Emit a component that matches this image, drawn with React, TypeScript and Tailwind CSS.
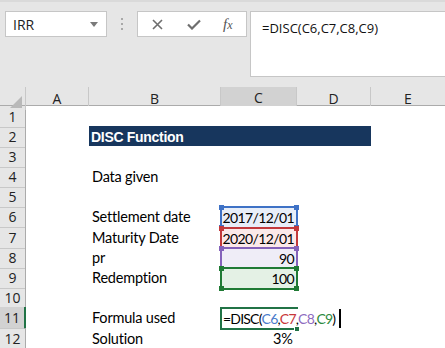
import React from "react";

const ui = { fontFamily: '"Open Sans", "Noto Sans", sans-serif' };
const cell = { fontFamily: 'Lato, "Open Sans", sans-serif' };

const heights = [20, 20, 20, 20, 20, 21, 20, 20, 20, 20, 21, 20];

const refs = {
  6: { value: "2017/12/01", border: "border-[#3f72c6]", fill: "bg-[#e8eef8]", handle: "bg-[#3f72c6]" },
  7: { value: "2020/12/01", border: "border-[#c2393c]", fill: "bg-[#fbe9e9]", handle: "bg-[#c2393c]" },
  8: { value: "90", border: "border-[#8462ba]", fill: "bg-[#efedf7]", handle: "bg-[#8462ba]" },
  9: { value: "100", border: "border-[#1f7a34]", fill: "bg-[#e4f1e5]", handle: "bg-[#1f7a34]" },
} as const;

const labels: Record<number, string> = {
  4: "Data given",
  6: "Settlement date",
  7: "Maturity Date",
  8: "pr",
  9: "Redemption",
  11: "Formula used",
  12: "Solution",
};

function RefCell({ row }: { row: 6 | 7 | 8 | 9 }) {
  const r = refs[row];
  return (
    <div className={`relative flex h-full items-center justify-end pr-[3px] ${r.fill}`}>
      <div className={`absolute -left-[1px] -right-[1px] top-0 -bottom-[1px] border-2 ${r.border}`} />
      <span className={`absolute -left-[2px] -top-[1px] h-[5px] w-[5px] ${r.handle}`} />
      <span className={`absolute -right-[2px] -top-[1px] h-[5px] w-[5px] ${r.handle}`} />
      <span className={`absolute -left-[2px] -bottom-[2px] h-[5px] w-[5px] ${r.handle}`} />
      <span className={`absolute -right-[2px] -bottom-[2px] h-[5px] w-[5px] ${r.handle}`} />
      <span className="relative text-[14px] tracking-[-0.6px] text-black">{r.value}</span>
    </div>
  );
}

function FormulaCell() {
  return (
    <div className="relative flex h-full items-center">
      <div className="absolute -left-[1px] -right-[1px] top-0 -bottom-[1px] border-2 border-r-0 border-[#217346]" />
      <span className="absolute -right-[3px] -bottom-[3px] h-[6px] w-[6px] border border-white bg-[#217346]" />
      <span className="relative z-10 flex items-center whitespace-nowrap pl-[2px] text-[14px] tracking-[-0.8px] text-black">
        =DISC(<span className="text-[#4a7bcb]">C6</span>,<span className="text-[#c8373a]">C7</span>,
        <span className="text-[#8e6bc0]">C8</span>,<span className="text-[#2b8a3e]">C9</span>)
        <span className="ml-[4px] inline-block h-[19px] w-[2px] bg-black" />
      </span>
    </div>
  );
}

export default function App() {
  return (
    <div className="h-[348px] w-[445px] overflow-hidden bg-[#e6e6e6]" style={ui}>
      {/* toolbar */}
      <div className="h-[87px] border-t-2 border-[#dadada] pt-[9px]">
        <div className="flex items-start">
          <div className="ml-[5px] flex h-[26px] w-[102px] items-center justify-between border border-[#c6c6c6] bg-white pl-[7px] pr-[8px]">
            <span className="text-[14px] text-[#222]">IRR</span>
            <svg width="8" height="5" viewBox="0 0 8 5">
              <path d="M0 0h8L4 5z" fill="#7a7a7a" />
            </svg>
          </div>
          <div className="ml-[14px] mt-[7px] flex w-[4px] flex-col gap-[3px]">
            <span className="h-[2px] w-[2px] bg-[#a8a8a8]" />
            <span className="h-[2px] w-[2px] bg-[#a8a8a8]" />
            <span className="h-[2px] w-[2px] bg-[#a8a8a8]" />
          </div>
          <div className="ml-[12px] flex h-[26px] w-[110px] items-center border border-[#c6c6c6] bg-white">
            <svg className="ml-[14px]" width="11" height="11" viewBox="0 0 11 11">
              <path d="M1 1l9 9M10 1l-9 9" stroke="#6e6e6e" strokeWidth="1.6" />
            </svg>
            <svg className="ml-[24px]" width="14" height="11" viewBox="0 0 14 11">
              <path d="M1 5.5l4 4 8-8" stroke="#6e6e6e" strokeWidth="2.2" fill="none" />
            </svg>
            <span
              className="ml-[22px] text-[15px] italic text-[#555]"
              style={{ fontFamily: '"Liberation Serif", serif' }}
            >
              f<span className="text-[12px]">x</span>
            </span>
          </div>
          <div className="ml-[3px] h-[66px] flex-1 border border-r-0 border-[#c6c6c6] bg-white pl-[11px] pt-[3px]">
            <span className="text-[13px] text-[#111]">=DISC(C6,C7,C8,C9)</span>
          </div>
        </div>
      </div>

      {/* column headers */}
      <div className="grid h-[19px] grid-cols-[26px_63px_132px_76px_74px_1fr] border-b border-[#ababab] text-[14px] text-[#222]">
        <div className="relative border-r border-[#c8c8c8]">
          <svg className="absolute bottom-[2px] right-[3px]" width="12" height="12" viewBox="0 0 12 12">
            <path d="M12 0v12H0z" fill="#b9b9b9" />
          </svg>
        </div>
        <div className="flex items-center justify-center border-r border-[#c8c8c8]">A</div>
        <div className="flex items-center justify-center border-r border-[#c8c8c8]">B</div>
        <div className="flex items-center justify-center border-b-2 border-r border-b-[#217346] border-r-[#c8c8c8] bg-[#d2d2d2]">
          C
        </div>
        <div className="flex items-center justify-center border-r border-[#c8c8c8]">D</div>
        <div className="flex items-center justify-center">E</div>
      </div>

      {/* rows */}
      {heights.map((h, i) => {
        const row = i + 1;
        const active = row === 11;
        return (
          <div
            key={row}
            className="grid grid-cols-[26px_63px_132px_76px_74px_1fr]"
            style={{ height: h }}
          >
            <div
              className={`flex items-center justify-center border-b border-[#c8c8c8] text-[14px] text-[#222] ${
                active ? "border-r-2 border-r-[#217346] bg-[#d2d2d2]" : "border-r border-r-[#ababab]"
              }`}
            >
              {row}
            </div>
            <div className="bg-white" />
            {row === 2 ? (
              <div className="col-span-3 flex items-center bg-[#17365d] pl-[2px]">
                <span
                  className="text-[14px] font-bold tracking-[-0.3px] text-white"
                  style={{ fontFamily: '"Liberation Sans", Arial, sans-serif' }}
                >
                  DISC Function
                </span>
              </div>
            ) : (
              <>
                <div
                  className="flex items-center bg-white pl-[3px] text-[14.5px] tracking-[-0.2px] text-black"
                  style={cell}
                >
                  {labels[row] ?? ""}
                </div>
                <div className="bg-white" style={cell}>
                  {row >= 6 && row <= 9 ? (
                    <RefCell row={row as 6 | 7 | 8 | 9} />
                  ) : row === 11 ? (
                    <FormulaCell />
                  ) : row === 12 ? (
                    <div className="flex h-full items-center justify-end pr-[4px] text-[14.5px] text-black">3%</div>
                  ) : null}
                </div>
                <div className="bg-white" />
              </>
            )}
            <div className="bg-white" />
          </div>
        );
      })}
    </div>
  );
}
